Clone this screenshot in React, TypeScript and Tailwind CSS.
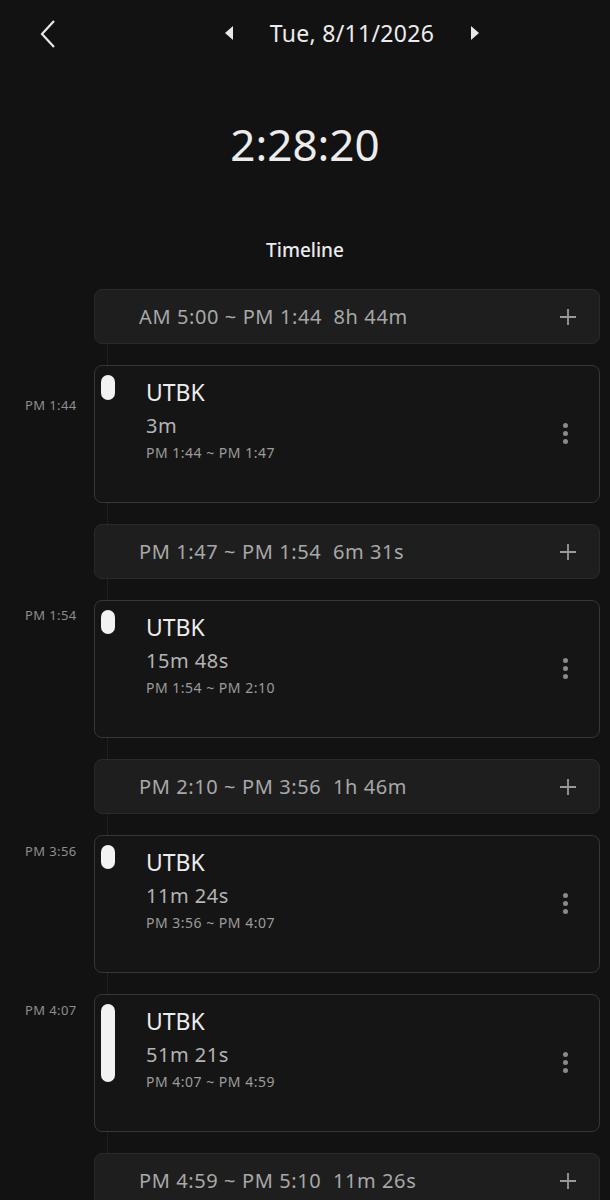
import React from "react";

type Item =
  | { kind: "gap"; text: string }
  | { kind: "session"; label: string; labelTop: number; duration: string; range: string; bar: number };

const ITEMS: Item[] = [
  { kind: "gap", text: "AM 5:00 ~ PM 1:44  8h 44m" },
  { kind: "session", label: "PM 1:44", labelTop: 31, duration: "3m", range: "PM 1:44 ~ PM 1:47", bar: 25 },
  { kind: "gap", text: "PM 1:47 ~ PM 1:54  6m 31s" },
  { kind: "session", label: "PM 1:54", labelTop: 6, duration: "15m 48s", range: "PM 1:54 ~ PM 2:10", bar: 24 },
  { kind: "gap", text: "PM 2:10 ~ PM 3:56  1h 46m" },
  { kind: "session", label: "PM 3:56", labelTop: 7, duration: "11m 24s", range: "PM 3:56 ~ PM 4:07", bar: 24 },
  { kind: "session", label: "PM 4:07", labelTop: 7, duration: "51m 21s", range: "PM 4:07 ~ PM 4:59", bar: 78 },
  { kind: "gap", text: "PM 4:59 ~ PM 5:10  11m 26s" },
];

function Spacer() {
  return (
    <div className="flex h-[21px]">
      <div className="w-[107px] shrink-0" />
      <div className="h-full border-l border-dotted border-[#2c2c2c]" />
    </div>
  );
}

function GapRow({ text }: { text: string }) {
  return (
    <div className="flex">
      <div className="w-[94px] shrink-0" />
      <div className="flex h-[55px] flex-1 items-center justify-between rounded-lg border border-[#2a2a2a] bg-[#1e1e1e] pl-[44px] pr-[22px]">
        <span className="whitespace-pre text-[20px] tracking-[0.6px] text-[#a8a8a8]">{text}</span>
        <svg width="18" height="18" viewBox="0 0 18 18" fill="none" stroke="#9a9a9a" strokeWidth="1.8">
          <path d="M9 1v16M1 9h16" />
        </svg>
      </div>
    </div>
  );
}

function SessionRow({ item }: { item: Extract<Item, { kind: "session" }> }) {
  return (
    <div className="flex">
      <div className="w-[94px] shrink-0 pl-[25px]">
        <div className="text-[13px] tracking-[0.4px] text-[#8e8e8e]" style={{ paddingTop: item.labelTop }}>
          {item.label}
        </div>
      </div>
      <div className="relative flex h-[138px] flex-1 rounded-lg border border-[#363636] bg-[#151515]">
        <div className="pl-[6px] pt-[9px]">
          <div className="w-[14px] rounded-full bg-[#f2f2f2]" style={{ height: item.bar }} />
        </div>
        <div className="flex-1 pl-[31px] pt-[10px]">
          <div className="text-[23px] leading-[32px] text-[#ececec]">UTBK</div>
          <div className="mt-[4px] text-[20px] leading-[28px] tracking-[0.5px] text-[#b4b4b4]">{item.duration}</div>
          <div className="mt-[3px] text-[14px] leading-[20px] tracking-[0.5px] text-[#9c9c9c]">{item.range}</div>
        </div>
        <div className="flex flex-col items-center justify-center gap-[3px] pr-[31px] pb-[2px]">
          <span className="h-[5px] w-[5px] rounded-full bg-[#8a8a8a]" />
          <span className="h-[5px] w-[5px] rounded-full bg-[#8a8a8a]" />
          <span className="h-[5px] w-[5px] rounded-full bg-[#8a8a8a]" />
        </div>
      </div>
    </div>
  );
}

export default function App() {
  return (
    <div
      className="h-[1200px] w-[610px] overflow-hidden bg-[#121212] text-white"
      style={{ fontFamily: "'Noto Sans', 'Open Sans', sans-serif" }}
    >
      <header className="relative flex h-[66px] items-center justify-center">
        <button type="button" className="absolute left-[34px] top-[15px] p-1">
          <svg width="20" height="30" viewBox="0 0 20 30" fill="none" stroke="#e8e8e8" strokeWidth="2.2">
            <path d="M16 2L4 15l12 13" />
          </svg>
        </button>
        <div className="flex items-center gap-[36px] pl-[94px]">
          <svg width="10" height="14" viewBox="0 0 10 14">
            <path d="M9 0v14L1 7z" fill="#e8e8e8" />
          </svg>
          <span className="text-[23px] tracking-[0.3px] text-[#ececec]">Tue, 8/11/2026</span>
          <svg width="10" height="14" viewBox="0 0 10 14">
            <path d="M1 0v14l8-7z" fill="#e8e8e8" />
          </svg>
        </div>
      </header>

      <div className="pt-[46px] text-center text-[44px] leading-[64px] text-[#ececec]">2:28:20</div>

      <div className="pt-[60px] text-center text-[19px] font-medium leading-[28px] text-[#ececec]">Timeline</div>

      <div className="flex flex-col pt-[25px] pr-[10px]">
        {ITEMS.map((item, i) => (
          <React.Fragment key={i}>
            {i > 0 && <Spacer />}
            {item.kind === "gap" ? <GapRow text={item.text} /> : <SessionRow item={item} />}
          </React.Fragment>
        ))}
      </div>
    </div>
  );
}
